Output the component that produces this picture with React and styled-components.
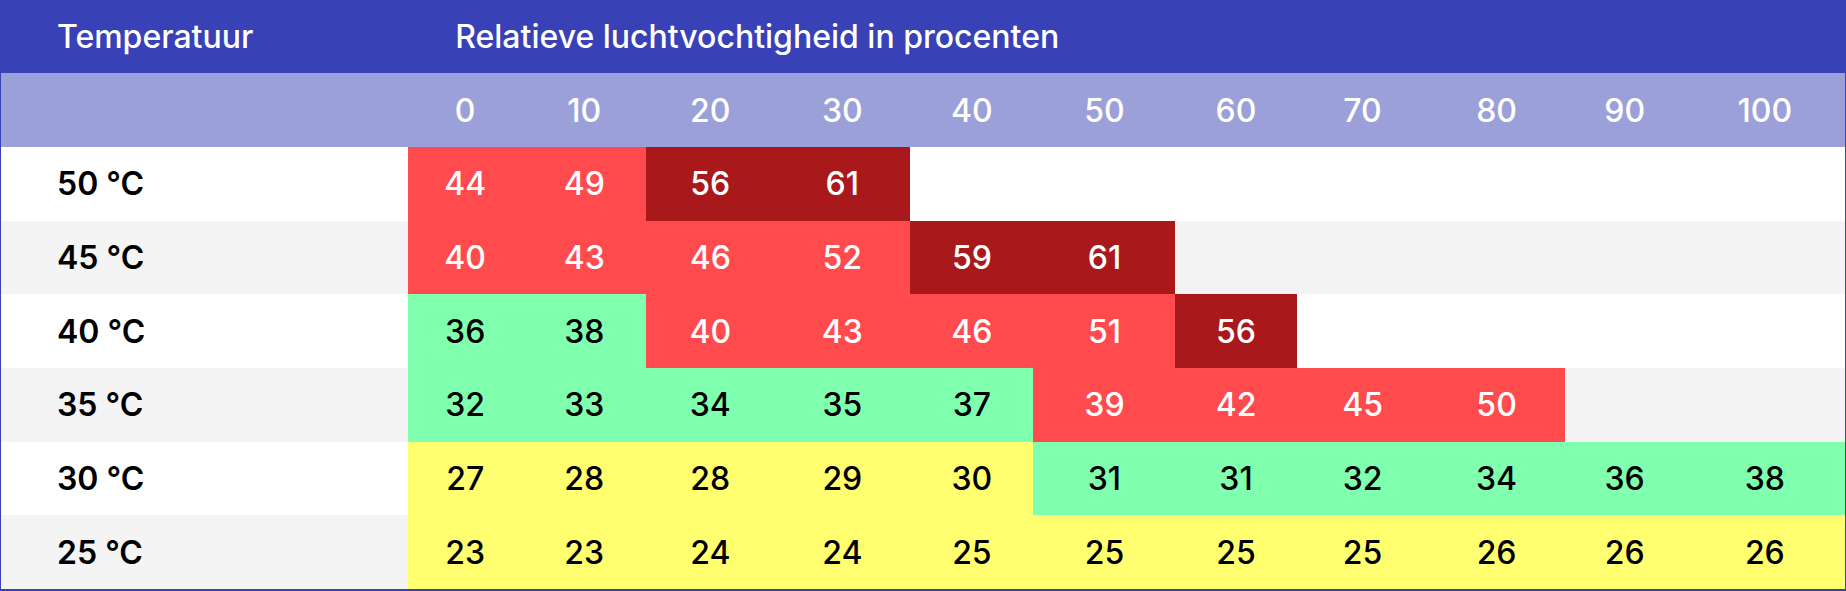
import React from "react";
import styled, { createGlobalStyle } from "styled-components";

const GlobalStyle = createGlobalStyle`
  html, body {
    margin: 0;
    padding: 0;
    background: #fff;
  }
  body {
    font-family: Inter, "Noto Sans", sans-serif;
  }
`;

const Frame = styled.div`
  width: 1846px;
  box-sizing: border-box;
  border-left: 1px solid #3742b5;
  border-right: 1px solid #3742b5;
  border-bottom: 2px solid #3742b5;
`;

const Table = styled.table`
  width: 100%;
  table-layout: fixed;
  border-collapse: collapse;
  border-spacing: 0;
`;

const TitleRow = styled.tr`
  height: 73px;
  background: #3841b6;
  color: #fff;
`;

const TitleCell = styled.th`
  padding: 0 0 0 ${(p) => p.$indent}px;
  text-align: left;
  font-size: 32px;
  font-weight: 500;
  white-space: nowrap;
`;

const ScaleRow = styled.tr`
  height: 74px;
  background: #9ba0d9;
  color: #fff;
`;

const ScaleCell = styled.th`
  padding: 0;
  text-align: center;
  font-size: 32px;
  font-weight: 500;
`;

const DataRow = styled.tr`
  height: 73.67px;
  background: ${(p) => (p.$striped ? "#f4f4f4" : "#fff")};
`;

const TempCell = styled.th`
  padding: 0 0 0 56px;
  text-align: left;
  font-size: 32px;
  font-weight: 600;
  color: #000;
  white-space: nowrap;
`;

const zones = {
  r: { bg: "#ff4b4e", fg: "#fff" },
  d: { bg: "#a9191b", fg: "#fff" },
  g: { bg: "#80ffae", fg: "#000" },
  y: { bg: "#ffff6f", fg: "#000" },
};

const ValueCell = styled.td`
  padding: 0;
  text-align: center;
  font-size: 32px;
  font-weight: 500;
  background: ${(p) => (p.$zone ? zones[p.$zone].bg : "transparent")};
  color: ${(p) => (p.$zone ? zones[p.$zone].fg : "#000")};
`;

const widths = [407, 114, 124, 128, 136, 123, 142, 121, 132, 136, 120, 160];
const humidity = [0, 10, 20, 30, 40, 50, 60, 70, 80, 90, 100];

const rows = [
  { temp: 50, cells: ["44r", "49r", "56d", "61d"] },
  { temp: 45, cells: ["40r", "43r", "46r", "52r", "59d", "61d"] },
  { temp: 40, cells: ["36g", "38g", "40r", "43r", "46r", "51r", "56d"] },
  { temp: 35, cells: ["32g", "33g", "34g", "35g", "37g", "39r", "42r", "45r", "50r"] },
  { temp: 30, cells: ["27y", "28y", "28y", "29y", "30y", "31g", "31g", "32g", "34g", "36g", "38g"] },
  { temp: 25, cells: ["23y", "23y", "24y", "24y", "25y", "25y", "25y", "25y", "26y", "26y", "26y"] },
];

export default function App() {
  return (
    <Frame>
      <GlobalStyle />
      <Table>
        <colgroup>
          {widths.map((w, i) => (
            <col key={i} style={{ width: w }} />
          ))}
        </colgroup>
        <thead>
          <TitleRow>
            <TitleCell $indent={56}>Temperatuur</TitleCell>
            <TitleCell $indent={47} colSpan={11}>
              Relatieve luchtvochtigheid in procenten
            </TitleCell>
          </TitleRow>
          <ScaleRow>
            <ScaleCell />
            {humidity.map((h) => (
              <ScaleCell key={h}>{h}</ScaleCell>
            ))}
          </ScaleRow>
        </thead>
        <tbody>
          {rows.map((row, i) => (
            <DataRow key={row.temp} $striped={i % 2 === 1}>
              <TempCell>{row.temp} °C</TempCell>
              {humidity.map((h, j) => {
                const c = row.cells[j];
                return (
                  <ValueCell key={h} $zone={c ? c.slice(-1) : null}>
                    {c ? c.slice(0, -1) : ""}
                  </ValueCell>
                );
              })}
            </DataRow>
          ))}
        </tbody>
      </Table>
    </Frame>
  );
}
